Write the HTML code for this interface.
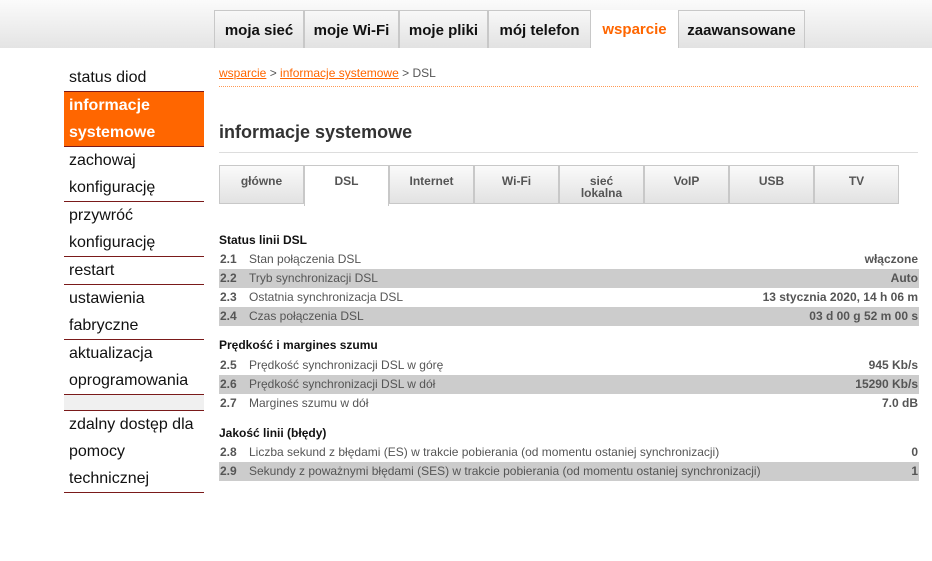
<!DOCTYPE html>
<html><head><style>
*{margin:0;padding:0;box-sizing:border-box}
body{width:932px;height:561px;background:#fff;font-family:"Liberation Sans",Arial,sans-serif;position:relative;overflow:hidden}
.top{position:absolute;left:0;top:0;width:932px;height:48px;background:linear-gradient(#fbfbfb,#e4e4e4)}
.tab{position:absolute;top:10px;height:38px;border:1px solid #c8c8c8;border-bottom:none;background:linear-gradient(#f8f8f8,#e2e2e2);font-weight:bold;font-size:15px;color:#111;text-align:center;line-height:40px}
.tab.a{background:#fff;color:#ff6600;border:none}
.side{position:absolute;left:64px;width:140px;font-size:16px;color:#111}
.side div{padding-left:5px;line-height:27px;border-bottom:1px solid #7a1a1a}
.side .act{background:#ff6600;color:#fff;font-weight:bold}
.crumb{position:absolute;left:219px;top:66px;font-size:12px;color:#555}
.crumb a{color:#ff6600;text-decoration:underline}
.dots{position:absolute;left:219px;top:86px;width:699px;border-top:1px dotted #ff9955}
h1{position:absolute;left:219px;top:122px;font-size:18px;color:#333;font-weight:bold}
.hr{position:absolute;left:219px;top:152px;width:699px;border-top:1px solid #ddd}
.st{position:absolute;top:165px;width:85px;height:39px;border:1px solid #c8c8c8;background:linear-gradient(#fafafa,#e2e2e2);font-size:12px;font-weight:bold;color:#555;text-align:center;padding-top:9px;line-height:12px}
.st.a{background:#fff;height:41px;border-bottom:none}
.sec{position:absolute;left:219px;font-size:12px;font-weight:bold;color:#111}
.row{position:absolute;left:219px;width:700px;height:19px;font-size:12px;line-height:19px;color:#555}
.row.g{background:#ccc}
.row b{position:absolute;left:1px;color:#555}
.row span{position:absolute;left:30px}
.row i{position:absolute;right:1px;font-style:normal;font-weight:bold;color:#555}
</style></head><body>
<div class="top"></div>
<div class="tab" style="left:214px;width:90px">moja sieć</div>
<div class="tab" style="left:304px;width:95px">moje Wi-Fi</div>
<div class="tab" style="left:399px;width:89px">moje pliki</div>
<div class="tab" style="left:488px;width:103px">mój telefon</div>
<div class="tab a" style="left:591px;width:87px">wsparcie</div>
<div class="tab" style="left:678px;width:127px">zaawansowane</div>

<div class="side" style="top:64px">
<div>status diod</div>
<div class="act">informacje<br>systemowe</div>
<div>zachowaj<br>konfigurację</div>
<div>przywróć<br>konfigurację</div>
<div>restart</div>
<div>ustawienia<br>fabryczne</div>
<div>aktualizacja<br>oprogramowania</div>
<div style="background:#f0f0f0;height:16px"></div>
<div>zdalny dostęp dla<br>pomocy<br>technicznej</div>
</div>

<div class="crumb"><a>wsparcie</a> &gt; <a>informacje systemowe</a> &gt; DSL</div>
<div class="dots"></div>
<h1>informacje systemowe</h1>
<div class="hr"></div>

<div class="st" style="left:219px">główne</div>
<div class="st a" style="left:304px">DSL</div>
<div class="st" style="left:389px">Internet</div>
<div class="st" style="left:474px">Wi-Fi</div>
<div class="st" style="left:559px">sieć<br>lokalna</div>
<div class="st" style="left:644px">VoIP</div>
<div class="st" style="left:729px">USB</div>
<div class="st" style="left:814px">TV</div>

<div class="sec" style="top:233px">Status linii DSL</div>
<div class="row" style="top:250px"><b>2.1</b><span>Stan połączenia DSL</span><i>włączone</i></div>
<div class="row g" style="top:269px"><b>2.2</b><span>Tryb synchronizacji DSL</span><i>Auto</i></div>
<div class="row" style="top:288px"><b>2.3</b><span>Ostatnia synchronizacja DSL</span><i>13 stycznia 2020, 14 h 06 m</i></div>
<div class="row g" style="top:307px"><b>2.4</b><span>Czas połączenia DSL</span><i>03 d 00 g 52 m 00 s</i></div>
<div class="sec" style="top:338px">Prędkość i margines szumu</div>
<div class="row" style="top:356px"><b>2.5</b><span>Prędkość synchronizacji DSL w górę</span><i>945 Kb/s</i></div>
<div class="row g" style="top:375px"><b>2.6</b><span>Prędkość synchronizacji DSL w dół</span><i>15290 Kb/s</i></div>
<div class="row" style="top:394px"><b>2.7</b><span>Margines szumu w dół</span><i>7.0 dB</i></div>
<div class="sec" style="top:426px">Jakość linii (błędy)</div>
<div class="row" style="top:443px"><b>2.8</b><span>Liczba sekund z błędami (ES) w trakcie pobierania (od momentu ostaniej synchronizacji)</span><i>0</i></div>
<div class="row g" style="top:462px"><b>2.9</b><span>Sekundy z poważnymi błędami (SES) w trakcie pobierania (od momentu ostaniej synchronizacji)</span><i>1</i></div>
</body></html>
